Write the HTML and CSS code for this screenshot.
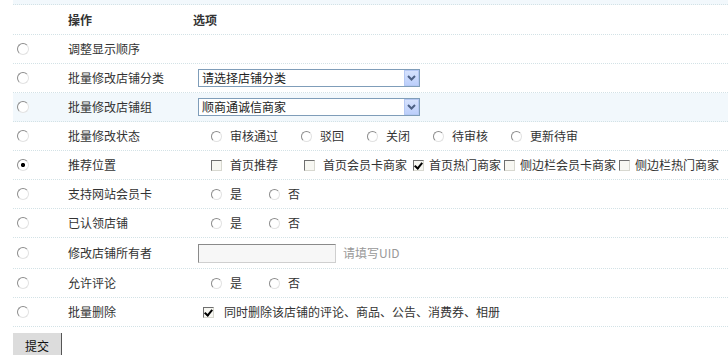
FILE: index.html
```html
<!DOCTYPE html>
<html lang="zh-CN">

<head>
    <meta charset="UTF-8">
    <meta name="viewport" content="width=device-width, initial-scale=1.0">
    <title>批量操作</title>
    <link rel="stylesheet" href="styles.css">
</head>

<body>
    <form class="batch">
        <div class="band"></div>
        <div class="row head">
            <span></span>
            <span class="name">操作</span>
            <span class="opt-head">选项</span>
        </div>

        <div class="row">
            <span class="pick"><input type="radio" name="op"></span>
            <span class="name">调整显示顺序</span>
            <span class="cell"></span>
        </div>

        <div class="row">
            <span class="pick"><input type="radio" name="op"></span>
            <span class="name">批量修改店铺分类</span>
            <span class="cell">
                <span class="select-box">
                    <select>
                        <option>请选择店铺分类</option>
                    </select>
                    <span class="arrow"><svg width="9" height="6" viewBox="0 0 9 6"><polyline points="1,1 4.5,4.5 8,1" fill="none" stroke="#4d6185" stroke-width="2"/></svg></span>
                </span>
            </span>
        </div>

        <div class="row hl">
            <span class="pick"><input type="radio" name="op"></span>
            <span class="name">批量修改店铺组</span>
            <span class="cell">
                <span class="select-box">
                    <select>
                        <option>顺商通诚信商家</option>
                    </select>
                    <span class="arrow"><svg width="9" height="6" viewBox="0 0 9 6"><polyline points="1,1 4.5,4.5 8,1" fill="none" stroke="#4d6185" stroke-width="2"/></svg></span>
                </span>
            </span>
        </div>

        <div class="row">
            <span class="pick"><input type="radio" name="op"></span>
            <span class="name">批量修改状态</span>
            <span class="cell opts">
                <label class="opt"><input type="radio" name="status">审核通过</label>
                <label class="opt"><input type="radio" name="status">驳回</label>
                <label class="opt"><input type="radio" name="status">关闭</label>
                <label class="opt"><input type="radio" name="status">待审核</label>
                <label class="opt"><input type="radio" name="status">更新待审</label>
            </span>
        </div>

        <div class="row">
            <span class="pick"><input type="radio" name="op" checked></span>
            <span class="name">推荐位置</span>
            <span class="cell opts">
                <label class="chk wide"><input type="checkbox">首页推荐</label>
                <label class="chk mid"><input type="checkbox">首页会员卡商家</label>
                <label class="chk"><input type="checkbox" checked>首页热门商家</label>
                <label class="chk"><input type="checkbox">侧边栏会员卡商家</label>
                <label class="chk"><input type="checkbox">侧边栏热门商家</label>
            </span>
        </div>

        <div class="row">
            <span class="pick"><input type="radio" name="op"></span>
            <span class="name">支持网站会员卡</span>
            <span class="cell opts">
                <label class="opt yn"><input type="radio" name="card">是</label>
                <label class="opt yn"><input type="radio" name="card">否</label>
            </span>
        </div>

        <div class="row">
            <span class="pick"><input type="radio" name="op"></span>
            <span class="name">已认领店铺</span>
            <span class="cell opts">
                <label class="opt yn"><input type="radio" name="claim">是</label>
                <label class="opt yn"><input type="radio" name="claim">否</label>
            </span>
        </div>

        <div class="row tall">
            <span class="pick"><input type="radio" name="op"></span>
            <span class="name">修改店铺所有者</span>
            <span class="cell">
                <input type="text" class="uid">
                <span class="hint">请填写UID</span>
            </span>
        </div>

        <div class="row">
            <span class="pick"><input type="radio" name="op"></span>
            <span class="name">允许评论</span>
            <span class="cell opts">
                <label class="opt yn"><input type="radio" name="comment">是</label>
                <label class="opt yn"><input type="radio" name="comment">否</label>
            </span>
        </div>

        <div class="row">
            <span class="pick"><input type="radio" name="op"></span>
            <span class="name">批量删除</span>
            <span class="cell">
                <label class="chk del"><input type="checkbox" checked>同时删除该店铺的评论、商品、公告、消费券、相册</label>
            </span>
        </div>

        <button type="button" class="submit">提交</button>
    </form>
</body>

</html>
```

FILE: styles.css
```css
html, body {
    margin: 0;
    padding: 0;
}

body {
    font-family: "Noto Sans CJK SC", "DejaVu Sans", sans-serif;
    font-size: 12px;
    color: #333;
    background: #fff;
}

.batch {
    margin-left: 13px;
}

.band {
    height: 5px;
    box-sizing: border-box;
    background-color: #f2f8fc;
    border-bottom: 1px dotted #d3e2e6;
}

.row {
    display: grid;
    grid-template-columns: 47px 133px 1fr;
    align-items: center;
    height: 29px;
    box-sizing: border-box;
    border-bottom: 1px dotted #d3e2e6;
    line-height: 14px;
}

.row.head {
    height: 30px;
    font-weight: bold;
}

.row.tall {
    height: 31px;
}

.row.hl {
    background-color: #f2f8fc;
}

.pick {
    display: flex;
    padding-left: 4px;
}

.name {
    padding-left: 8px;
    white-space: nowrap;
}

.cell {
    display: flex;
    align-items: center;
    white-space: nowrap;
}

/* classic radio */
input[type="radio"] {
    appearance: none;
    -webkit-appearance: none;
    margin: 0;
    width: 11px;
    height: 11px;
    border-radius: 50%;
    border: 1px solid;
    border-color: #8c8c8c #e2e2e2 #e2e2e2 #8c8c8c;
    background: #fff;
    box-sizing: border-box;
}

.pick input[type="radio"] {
    width: 12px;
    height: 12px;
}

input[type="radio"]:checked {
    background: radial-gradient(circle, #000 0, #000 1.8px, #fff 2.4px);
}

/* classic checkbox */
input[type="checkbox"] {
    appearance: none;
    -webkit-appearance: none;
    position: relative;
    margin: 0;
    width: 11px;
    height: 11px;
    box-sizing: border-box;
    border: 1px solid;
    border-color: #6f6f6f #d8d8d0 #d8d8d0 #6f6f6f;
    background: #f7f7f2;
}

input[type="checkbox"]:checked::after {
    content: "";
    position: absolute;
    left: 2px;
    top: 0;
    width: 3px;
    height: 6px;
    border-right: 2px solid #000;
    border-bottom: 2px solid #000;
    transform: rotate(40deg);
}

.opts {
    padding-left: 18px;
}

.opt {
    display: inline-flex;
    align-items: center;
    gap: 8px;
    margin-right: 23px;
}

.opt.yn {
    margin-right: 27px;
}

.chk {
    display: inline-flex;
    align-items: center;
    gap: 5px;
    margin-right: 3px;
}

.chk.wide {
    gap: 8px;
    margin-right: 26px;
}

.chk.mid {
    gap: 8px;
    margin-right: 6px;
}

.chk.del {
    gap: 10px;
    margin-left: 10px;
}

.opt-head {
    padding-left: 0;
}

/* dropdowns */
.select-box {
    position: relative;
    display: inline-block;
    margin-left: 5px;
}

.select-box select {
    appearance: none;
    -webkit-appearance: none;
    display: block;
    width: 222px;
    height: 18px;
    margin: 0;
    padding: 0 0 0 3px;
    border: 1px solid #7f9db9;
    border-radius: 0;
    background: #fff;
    font-family: inherit;
    font-size: 12px;
    line-height: 16px;
    color: #222;
}

.arrow {
    position: absolute;
    right: 1px;
    top: 1px;
    width: 15px;
    height: 16px;
    box-sizing: border-box;
    border: 1px solid #b5c8f3;
    background: linear-gradient(#d6e2fd, #bccffb);
    display: flex;
    align-items: center;
    justify-content: center;
}

.uid {
    margin: 0 0 0 5px;
    width: 138px;
    height: 19px;
    box-sizing: border-box;
    border: 1px solid;
    border-color: #8a8a8a #cfcfcf #cfcfcf #8a8a8a;
    background: #f7f7f7;
    padding: 0 3px;
}

.hint {
    margin-left: 7px;
    color: #999;
}

.submit {
    margin-top: 6px;
    width: 49px;
    height: 24px;
    padding: 0;
    border: none;
    border-right: 1px solid #555;
    background: #dcdcdc;
    font-family: inherit;
    font-size: 12px;
    color: #111;
}
```
